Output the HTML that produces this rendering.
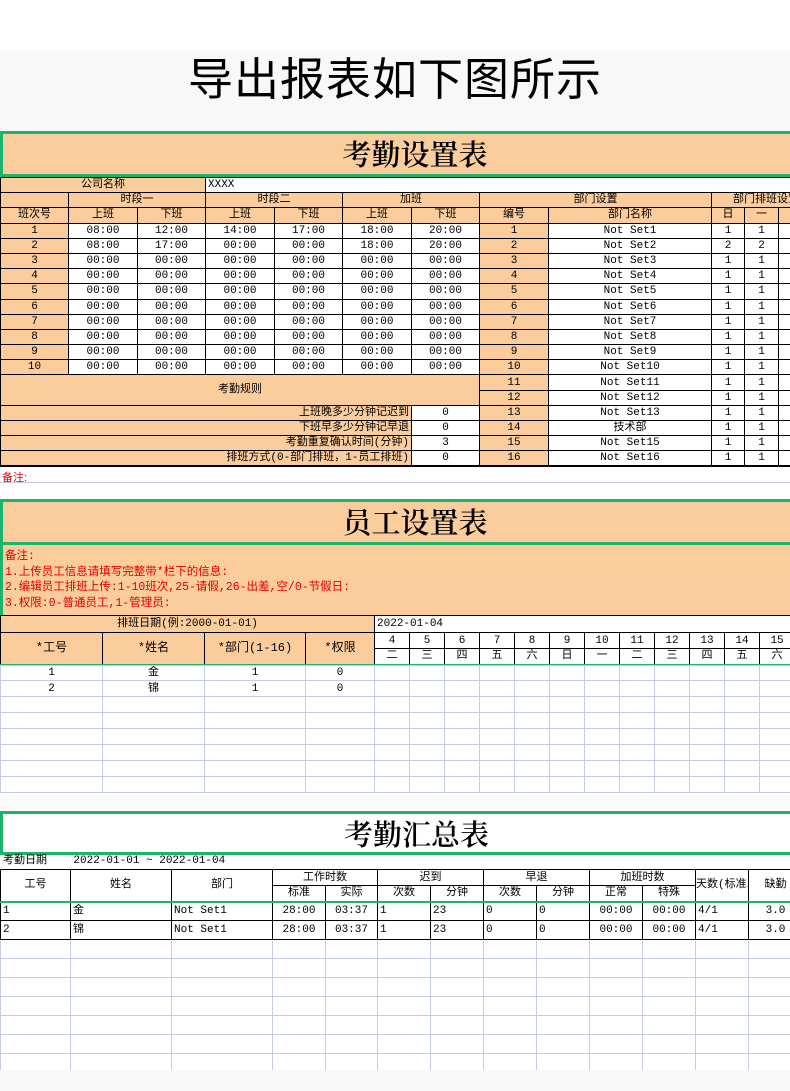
<!DOCTYPE html>
<html><head><meta charset="utf-8">
<style>
*{margin:0;padding:0;box-sizing:border-box}
body{width:790px;height:1091px;overflow:hidden;background:#fff;position:relative;font-family:"Liberation Sans","Noto Sans CJK SC",sans-serif;color:#000}
.abs{position:absolute}
.top{left:0;top:50px;width:790px;height:81px;background:#f8f8f8}
.top div{position:absolute;left:0;right:0;top:2px;text-align:center;font-size:45px;line-height:48px;font-family:"Noto Sans CJK SC",sans-serif;letter-spacing:1px}
.banner{left:0;width:830px;height:46px;background:#fccd9c;border:3px solid #1cb46c;text-align:center;font-family:"Noto Serif CJK SC",serif;font-size:29px;line-height:40px;font-weight:600}
table{border-collapse:collapse;table-layout:fixed;position:absolute;left:0}
td{border:1px solid #000;font-size:11px;text-align:center;white-space:nowrap;overflow:hidden;padding:0;line-height:12px;font-family:"Liberation Mono","Noto Sans CJK SC",monospace}
.p{background:#fccd9c}
.w{background:#fff}
.r{text-align:right;padding-right:2px}
.l{text-align:left;padding-left:2px}
.t1 tr{height:15.2px}
.t2 td{border-color:#000}
.g td{border:1px solid #c3cce0;background:#fff}
.red{color:#e00000}
</style></head><body>
<div class="abs" style="left:0;top:0;width:790px;height:50px;background:#fff"></div>
<div class="abs top"><div>导出报表如下图所示</div></div>

<div class="abs banner" style="top:131px">考勤设置表</div>
<table class="t1" style="top:177px;width:820px">
<colgroup><col style="width:68px"><col style="width:69px"><col style="width:68px"><col style="width:69px"><col style="width:68px"><col style="width:69px"><col style="width:68px"><col style="width:69px"><col style="width:163px"><col style="width:33px"><col style="width:34px"><col style="width:42px"></colgroup>
<tr><td class="p" colspan="3">公司名称</td><td class="w l" colspan="9" style="border-right:none">XXXX</td></tr>
<tr><td class="p"></td><td class="p" colspan="2">时段一</td><td class="p" colspan="2">时段二</td><td class="p" colspan="2">加班</td><td class="p" colspan="2">部门设置</td><td class="p" colspan="3">部门排班设置</td></tr>
<tr><td class="p">班次号</td><td class="p">上班</td><td class="p">下班</td><td class="p">上班</td><td class="p">下班</td><td class="p">上班</td><td class="p">下班</td><td class="p">编号</td><td class="p">部门名称</td><td class="p">日</td><td class="p">一</td><td class="p">二</td></tr>
<tr><td class="p">1</td><td>08:00</td><td>12:00</td><td>14:00</td><td>17:00</td><td>18:00</td><td>20:00</td><td class="p">1</td><td>Not Set1</td><td>1</td><td>1</td><td>1</td></tr>
<tr><td class="p">2</td><td>08:00</td><td>17:00</td><td>00:00</td><td>00:00</td><td>18:00</td><td>20:00</td><td class="p">2</td><td>Not Set2</td><td>2</td><td>2</td><td>2</td></tr>
<tr><td class="p">3</td><td>00:00</td><td>00:00</td><td>00:00</td><td>00:00</td><td>00:00</td><td>00:00</td><td class="p">3</td><td>Not Set3</td><td>1</td><td>1</td><td>1</td></tr>
<tr><td class="p">4</td><td>00:00</td><td>00:00</td><td>00:00</td><td>00:00</td><td>00:00</td><td>00:00</td><td class="p">4</td><td>Not Set4</td><td>1</td><td>1</td><td>1</td></tr>
<tr><td class="p">5</td><td>00:00</td><td>00:00</td><td>00:00</td><td>00:00</td><td>00:00</td><td>00:00</td><td class="p">5</td><td>Not Set5</td><td>1</td><td>1</td><td>1</td></tr>
<tr><td class="p">6</td><td>00:00</td><td>00:00</td><td>00:00</td><td>00:00</td><td>00:00</td><td>00:00</td><td class="p">6</td><td>Not Set6</td><td>1</td><td>1</td><td>1</td></tr>
<tr><td class="p">7</td><td>00:00</td><td>00:00</td><td>00:00</td><td>00:00</td><td>00:00</td><td>00:00</td><td class="p">7</td><td>Not Set7</td><td>1</td><td>1</td><td>1</td></tr>
<tr><td class="p">8</td><td>00:00</td><td>00:00</td><td>00:00</td><td>00:00</td><td>00:00</td><td>00:00</td><td class="p">8</td><td>Not Set8</td><td>1</td><td>1</td><td>1</td></tr>
<tr><td class="p">9</td><td>00:00</td><td>00:00</td><td>00:00</td><td>00:00</td><td>00:00</td><td>00:00</td><td class="p">9</td><td>Not Set9</td><td>1</td><td>1</td><td>1</td></tr>
<tr><td class="p">10</td><td>00:00</td><td>00:00</td><td>00:00</td><td>00:00</td><td>00:00</td><td>00:00</td><td class="p">10</td><td>Not Set10</td><td>1</td><td>1</td><td>1</td></tr>
<tr><td class="p" colspan="7" rowspan="2">考勤规则</td><td class="p">11</td><td>Not Set11</td><td>1</td><td>1</td><td>1</td></tr>
<tr><td class="p">12</td><td>Not Set12</td><td>1</td><td>1</td><td>1</td></tr>
<tr><td class="p r" colspan="6">上班晚多少分钟记迟到</td><td>0</td><td class="p">13</td><td>Not Set13</td><td>1</td><td>1</td><td>1</td></tr>
<tr><td class="p r" colspan="6">下班早多少分钟记早退</td><td>0</td><td class="p">14</td><td>技术部</td><td>1</td><td>1</td><td>1</td></tr>
<tr><td class="p r" colspan="6">考勤重复确认时间(分钟)</td><td>3</td><td class="p">15</td><td>Not Set15</td><td>1</td><td>1</td><td>1</td></tr>
<tr><td class="p r" colspan="6" style="border-bottom:2px solid #000">排班方式(0-部门排班，1-员工排班)</td><td style="border-bottom:2px solid #000">0</td><td class="p" style="border-bottom:2px solid #000">16</td><td style="border-bottom:2px solid #000">Not Set16</td><td style="border-bottom:2px solid #000">1</td><td style="border-bottom:2px solid #000">1</td><td style="border-bottom:2px solid #000">1</td></tr>
</table>
<div class="abs red" style="left:2px;top:469px;font-size:11px">备注:</div>
<div class="abs" style="left:0;top:482px;width:790px;height:1px;background:#c3cce0"></div>

<div class="abs banner" style="top:499px;height:46px">员工设置表</div>
<div class="abs p" style="left:0;top:545px;width:790px;height:70px;border-left:3px solid #1cb46c;padding:4px 0 0 2px;font-size:11.5px;line-height:15.5px;color:#e00000;font-family:'Liberation Mono','Noto Sans CJK SC',monospace">备注:<br>1.上传员工信息请填写完整带*栏下的信息:<br>2.编辑员工排班上传:1-10班次,25-请假,26-出差,空/0-节假日:<br>3.权限:0-普通员工,1-管理员:</div>
<table style="top:615px;width:794px">
<colgroup><col style="width:102px"><col style="width:102px"><col style="width:101px"><col style="width:69px"><col span="12" style="width:35px"></colgroup>
<tr style="height:17px"><td class="p" colspan="4">排班日期(例:2000-01-01)</td><td class="w l" colspan="12" style="border-right:none">2022-01-04</td></tr>
<tr style="height:16px"><td class="p" rowspan="2" style="font-size:12px;border-bottom:2px solid #1cb46c">*工号</td><td class="p" rowspan="2" style="font-size:12px;border-bottom:2px solid #1cb46c">*姓名</td><td class="p" rowspan="2" style="font-size:12px;border-bottom:2px solid #1cb46c">*部门(1-16)</td><td class="p" rowspan="2" style="font-size:12px;border-bottom:2px solid #1cb46c">*权限</td><td>4</td><td>5</td><td>6</td><td>7</td><td>8</td><td>9</td><td>10</td><td>11</td><td>12</td><td>13</td><td>14</td><td>15</td></tr>
<tr style="height:16px"><td style="border-bottom:2px solid #1cb46c">二</td><td style="border-bottom:2px solid #1cb46c">三</td><td style="border-bottom:2px solid #1cb46c">四</td><td style="border-bottom:2px solid #1cb46c">五</td><td style="border-bottom:2px solid #1cb46c">六</td><td style="border-bottom:2px solid #1cb46c">日</td><td style="border-bottom:2px solid #1cb46c">一</td><td style="border-bottom:2px solid #1cb46c">二</td><td style="border-bottom:2px solid #1cb46c">三</td><td style="border-bottom:2px solid #1cb46c">四</td><td style="border-bottom:2px solid #1cb46c">五</td><td style="border-bottom:2px solid #1cb46c">六</td></tr>
</table>
<table class="g" style="top:665px;width:794px">
<colgroup><col style="width:102px"><col style="width:102px"><col style="width:101px"><col style="width:69px"><col span="12" style="width:35px"></colgroup>
<tr style="height:15px"><td>1</td><td>金</td><td>1</td><td>0</td><td></td><td></td><td></td><td></td><td></td><td></td><td></td><td></td><td></td><td></td><td></td><td></td></tr>
<tr style="height:16px"><td>2</td><td>锦</td><td>1</td><td>0</td><td></td><td></td><td></td><td></td><td></td><td></td><td></td><td></td><td></td><td></td><td></td><td></td></tr>
<tr style="height:16px"><td></td><td></td><td></td><td></td><td></td><td></td><td></td><td></td><td></td><td></td><td></td><td></td><td></td><td></td><td></td><td></td></tr>
<tr style="height:16px"><td></td><td></td><td></td><td></td><td></td><td></td><td></td><td></td><td></td><td></td><td></td><td></td><td></td><td></td><td></td><td></td></tr>
<tr style="height:16px"><td></td><td></td><td></td><td></td><td></td><td></td><td></td><td></td><td></td><td></td><td></td><td></td><td></td><td></td><td></td><td></td></tr>
<tr style="height:16px"><td></td><td></td><td></td><td></td><td></td><td></td><td></td><td></td><td></td><td></td><td></td><td></td><td></td><td></td><td></td><td></td></tr>
<tr style="height:16px"><td></td><td></td><td></td><td></td><td></td><td></td><td></td><td></td><td></td><td></td><td></td><td></td><td></td><td></td><td></td><td></td></tr>
<tr style="height:16px"><td></td><td></td><td></td><td></td><td></td><td></td><td></td><td></td><td></td><td></td><td></td><td></td><td></td><td></td><td></td><td></td></tr>
</table>
<div class="abs" style="left:0;top:795px;width:790px;height:16px;background:#fafafa"></div>

<div class="abs banner" style="top:811px;height:44px;background:#fff;border-right:none">考勤汇总表</div>
<div class="abs" style="left:3px;top:855px;font-size:11px;line-height:13px;font-family:'Liberation Mono','Noto Sans CJK SC',monospace">考勤日期&nbsp;&nbsp;&nbsp;&nbsp;2022-01-01 ~ 2022-01-04</div>
<table style="top:869px;width:800px">
<colgroup><col style="width:70px"><col style="width:101px"><col style="width:101px"><col style="width:53px"><col style="width:52px"><col style="width:53px"><col style="width:53px"><col style="width:53px"><col style="width:53px"><col style="width:53px"><col style="width:53px"><col style="width:53px"><col style="width:54px"></colgroup>
<tr style="height:16px"><td rowspan="2" style="border-bottom:2px solid #1cb46c">工号</td><td rowspan="2" style="border-bottom:2px solid #1cb46c">姓名</td><td rowspan="2" style="border-bottom:2px solid #1cb46c">部门</td><td colspan="2">工作时数</td><td colspan="2">迟到</td><td colspan="2">早退</td><td colspan="2">加班时数</td><td rowspan="2" class="l" style="border-bottom:2px solid #1cb46c;padding-left:0">天数(标准/</td><td rowspan="2" style="border-bottom:2px solid #1cb46c">缺勤</td></tr>
<tr style="height:16px"><td style="border-bottom:2px solid #1cb46c">标准</td><td style="border-bottom:2px solid #1cb46c">实际</td><td style="border-bottom:2px solid #1cb46c">次数</td><td style="border-bottom:2px solid #1cb46c">分钟</td><td style="border-bottom:2px solid #1cb46c">次数</td><td style="border-bottom:2px solid #1cb46c">分钟</td><td style="border-bottom:2px solid #1cb46c">正常</td><td style="border-bottom:2px solid #1cb46c">特殊</td></tr>
<tr style="height:19px"><td class="l">1</td><td class="l">金</td><td class="l">Not Set1</td><td>28:00</td><td>03:37</td><td class="l">1</td><td class="l">23</td><td class="l">0</td><td class="l">0</td><td>00:00</td><td>00:00</td><td class="l">4/1</td><td>3.0</td></tr>
<tr style="height:19px"><td class="l" style="border-bottom:2px solid #000">2</td><td class="l" style="border-bottom:2px solid #000">锦</td><td class="l" style="border-bottom:2px solid #000">Not Set1</td><td style="border-bottom:2px solid #000">28:00</td><td style="border-bottom:2px solid #000">03:37</td><td class="l" style="border-bottom:2px solid #000">1</td><td class="l" style="border-bottom:2px solid #000">23</td><td class="l" style="border-bottom:2px solid #000">0</td><td class="l" style="border-bottom:2px solid #000">0</td><td style="border-bottom:2px solid #000">00:00</td><td style="border-bottom:2px solid #000">00:00</td><td class="l" style="border-bottom:2px solid #000">4/1</td><td style="border-bottom:2px solid #000">3.0</td></tr>
</table>
<table class="g" style="top:940px;width:800px">
<colgroup><col style="width:70px"><col style="width:101px"><col style="width:101px"><col style="width:53px"><col style="width:52px"><col style="width:53px"><col style="width:53px"><col style="width:53px"><col style="width:53px"><col style="width:53px"><col style="width:53px"><col style="width:53px"><col style="width:54px"></colgroup>
<tr style="height:18px"><td style="border-top:none"></td><td style="border-top:none"></td><td style="border-top:none"></td><td style="border-top:none"></td><td style="border-top:none"></td><td style="border-top:none"></td><td style="border-top:none"></td><td style="border-top:none"></td><td style="border-top:none"></td><td style="border-top:none"></td><td style="border-top:none"></td><td style="border-top:none"></td><td style="border-top:none"></td></tr>
<tr style="height:19px"><td></td><td></td><td></td><td></td><td></td><td></td><td></td><td></td><td></td><td></td><td></td><td></td><td></td></tr>
<tr style="height:19px"><td></td><td></td><td></td><td></td><td></td><td></td><td></td><td></td><td></td><td></td><td></td><td></td><td></td></tr>
<tr style="height:19px"><td></td><td></td><td></td><td></td><td></td><td></td><td></td><td></td><td></td><td></td><td></td><td></td><td></td></tr>
<tr style="height:19px"><td></td><td></td><td></td><td></td><td></td><td></td><td></td><td></td><td></td><td></td><td></td><td></td><td></td></tr>
<tr style="height:19px"><td></td><td></td><td></td><td></td><td></td><td></td><td></td><td></td><td></td><td></td><td></td><td></td><td></td></tr>
<tr style="height:17px"><td style="border-bottom:none"></td><td style="border-bottom:none"></td><td style="border-bottom:none"></td><td style="border-bottom:none"></td><td style="border-bottom:none"></td><td style="border-bottom:none"></td><td style="border-bottom:none"></td><td style="border-bottom:none"></td><td style="border-bottom:none"></td><td style="border-bottom:none"></td><td style="border-bottom:none"></td><td style="border-bottom:none"></td><td style="border-bottom:none"></td></tr>
</table>
<div class="abs" style="left:0;top:1070px;width:790px;height:21px;background:#f8f8f8"></div>
</body></html>
